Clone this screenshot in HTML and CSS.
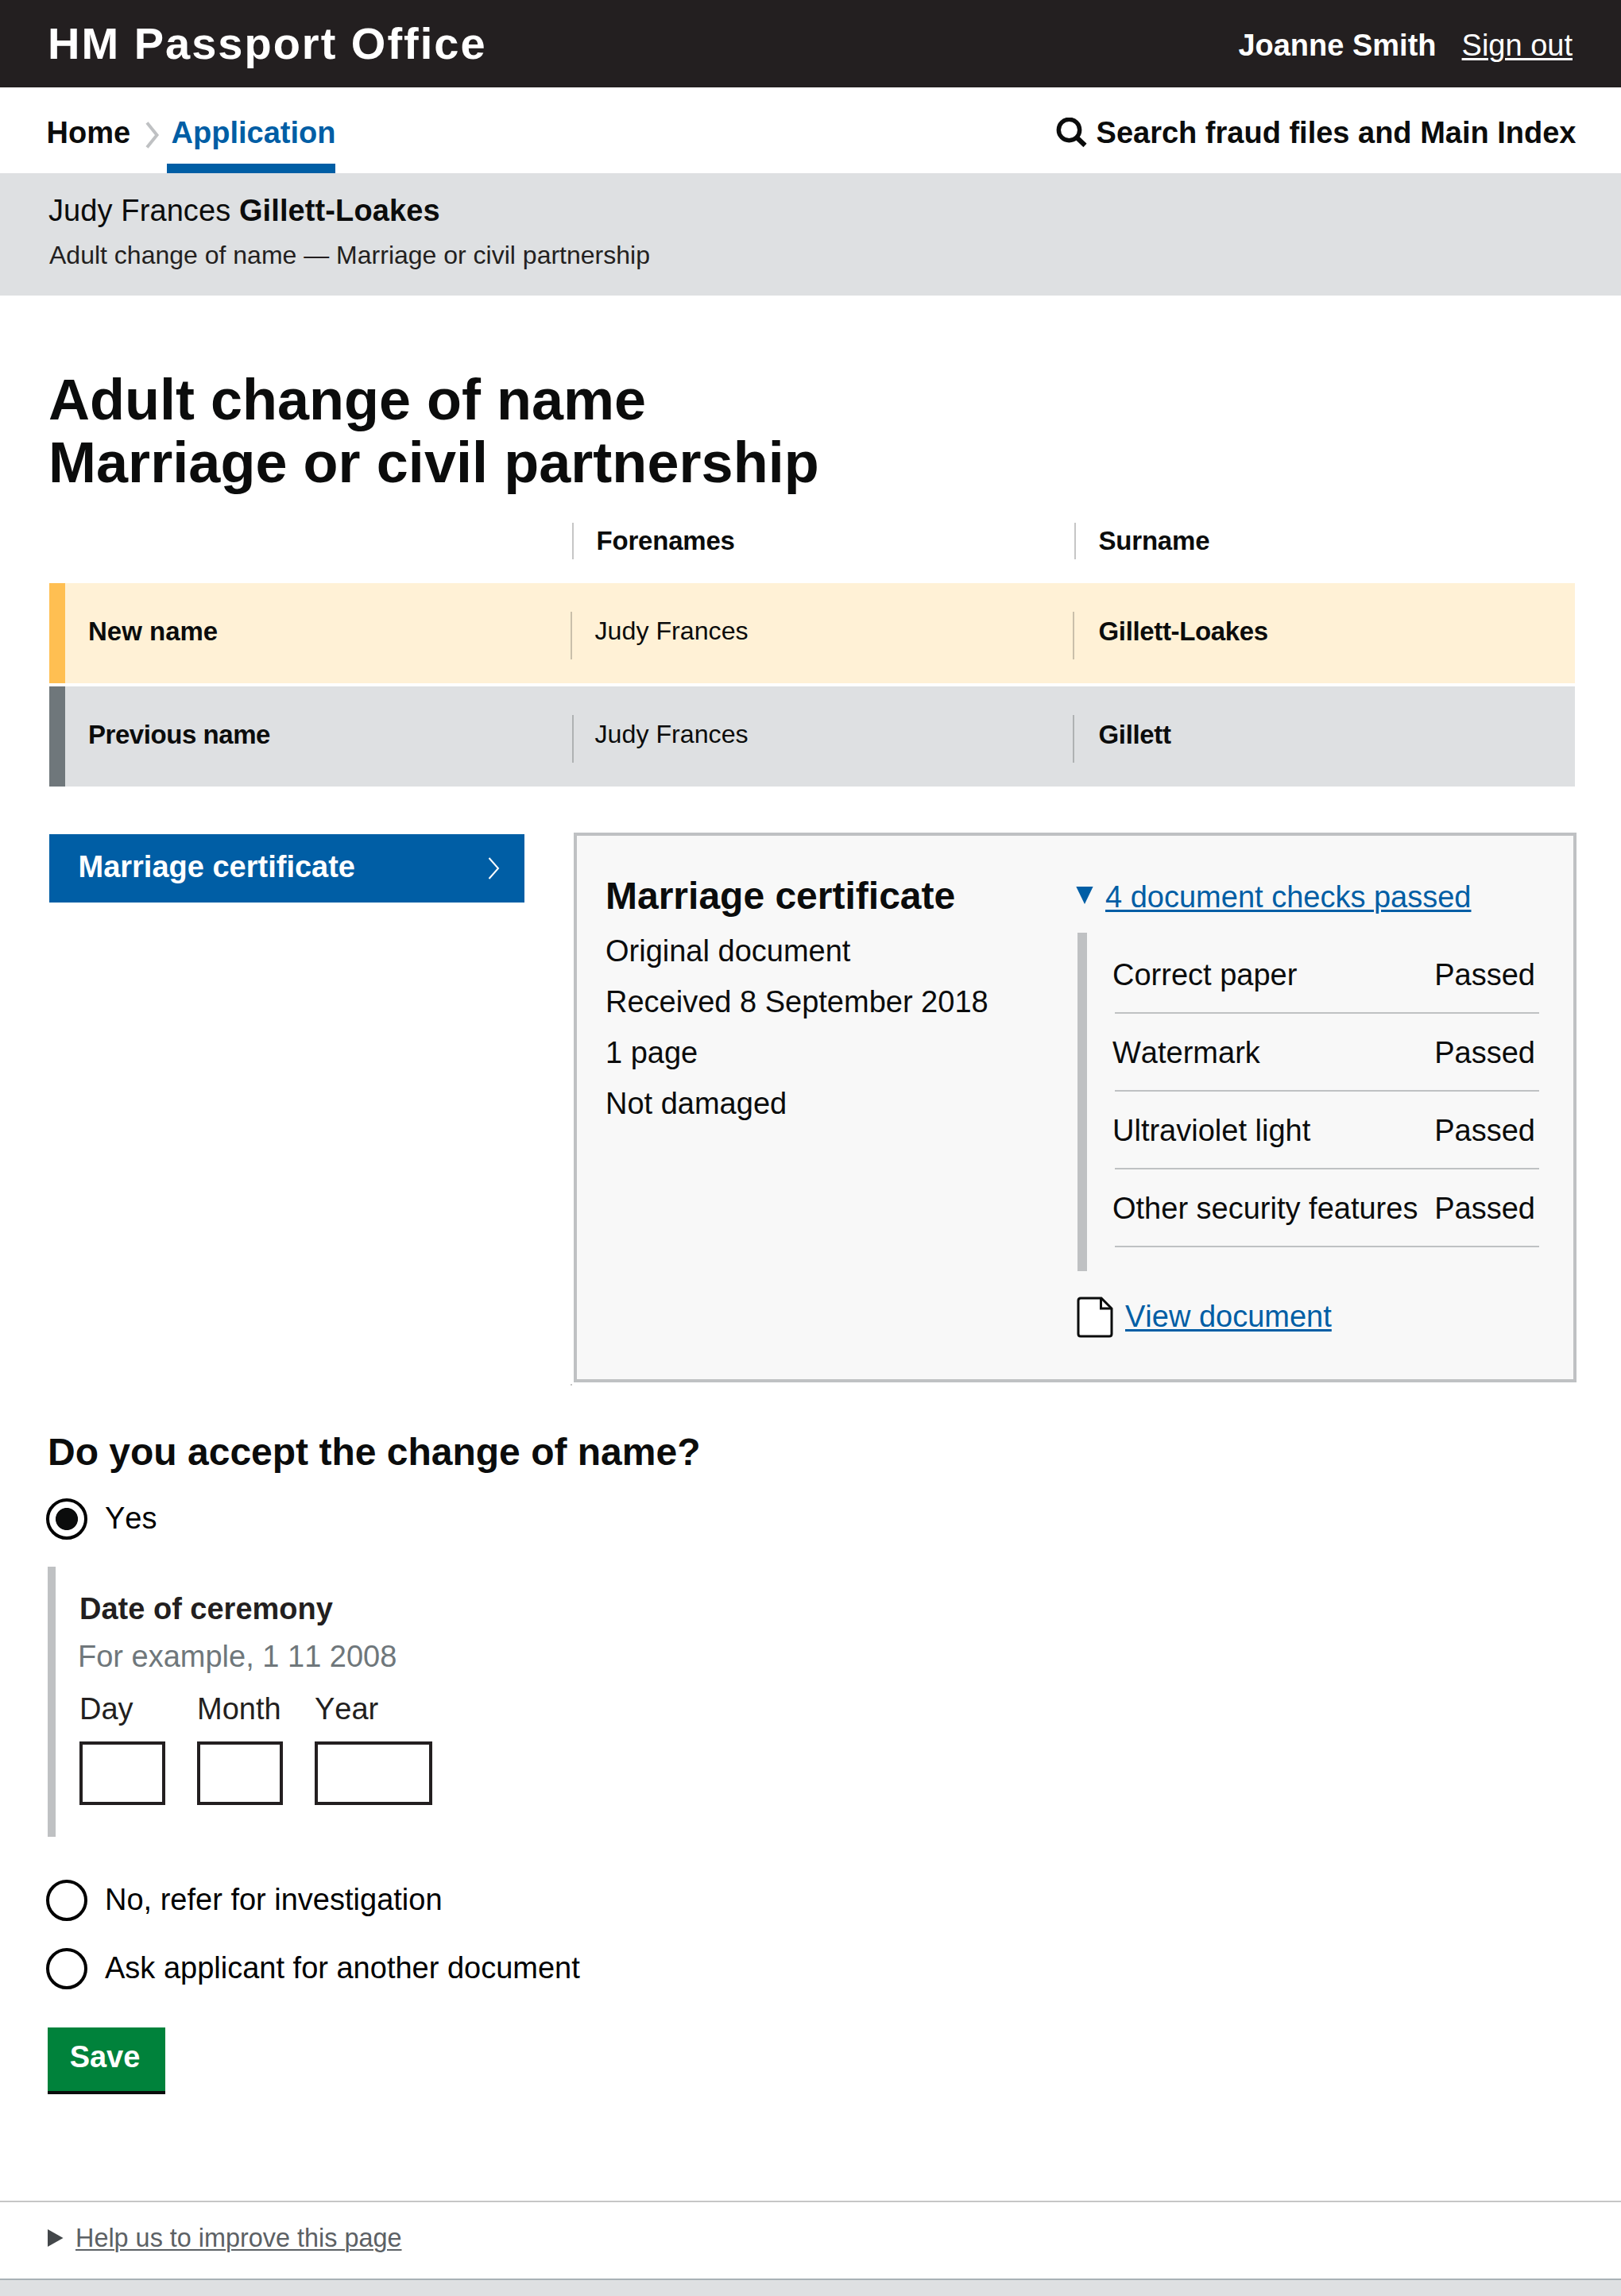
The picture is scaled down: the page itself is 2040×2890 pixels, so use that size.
FILE: index.html
```html
<!DOCTYPE html>
<html lang="en">
<head>
<meta charset="utf-8">
<title>Adult change of name - HM Passport Office</title>
<link rel="stylesheet" href="styles.css">
</head>
<body>
<header class="masthead">
  <div class="masthead-title">HM Passport Office</div>
  <div class="account"><strong>Joanne Smith</strong><a class="link-light" href="#">Sign out</a></div>
</header>
<nav class="nav">
  <a class="nav-link" href="#">Home</a>
  <svg class="nav-chevron" width="18" height="34" viewBox="0 0 18 34"><path d="M2 1.500 L14.500 17 L2 32.500" fill="none" stroke="#bfc1c3" stroke-width="4"/></svg>
  <a class="nav-link nav-current" href="#">Application</a>
  <a class="nav-link nav-search" href="#">
    <svg class="search-icon" width="39" height="38" viewBox="0 0 39 38"><circle cx="16.500" cy="15.500" r="13.200" fill="none" stroke="#0b0c0c" stroke-width="5.400"/><path d="M25.500 24.500 L36.500 35" stroke="#0b0c0c" stroke-width="6"/></svg>
    <span>Search fraud files and Main Index</span>
  </a>
</nav>
<section class="case-bar">
  <div class="case-name">Judy Frances <b>Gillett-Loakes</b></div>
  <div class="case-type">Adult change of name — Marriage or civil partnership</div>
</section>
<main>
  <h1 class="title">Adult change of name<br><span class="title-second">Marriage or civil partnership</span></h1>
  <div class="names">
    <div class="names-head"><span></span><span class="cell">Forenames</span><span class="cell">Surname</span></div>
    <div class="names-row names-new"><b class="row-label">New name</b><span class="cell forenames">Judy Frances</span><b class="cell surname">Gillett-Loakes</b></div>
    <div class="names-row names-previous"><b class="row-label">Previous name</b><span class="cell forenames">Judy Frances</span><b class="cell surname">Gillett</b></div>
  </div>
  <div class="evidence">
    <a class="tab" href="#"><span>Marriage certificate</span>
      <svg class="tab-chevron" width="16" height="28" viewBox="0 0 16 28"><path d="M1.500 1 L13 14 L1.500 27" fill="none" stroke="#fff" stroke-width="2"/></svg>
    </a>
    <section class="panel">
      <div class="panel-summary">
        <h2 class="panel-title">Marriage certificate</h2>
        <p>Original document</p>
        <p>Received 8 September 2018</p>
        <p>1 page</p>
        <p>Not damaged</p>
      </div>
      <div class="panel-checks">
        <div class="checks-toggle">
          <svg class="toggle-arrow" width="22" height="22" viewBox="0 0 22 22"><path d="M0.300 0 H21.600 L11 22 Z" fill="#005ea5"/></svg>
          <a class="link" href="#">4 document checks passed</a>
        </div>
        <ul class="checks">
          <li><span>Correct paper</span><span>Passed</span></li>
          <li><span>Watermark</span><span>Passed</span></li>
          <li><span>Ultraviolet light</span><span>Passed</span></li>
          <li><span>Other security features</span><span>Passed</span></li>
        </ul>
        <div class="view">
          <svg width="46" height="52" viewBox="0 0 46 52"><path d="M5 2 H31 L44 15 V47 Q44 50 41 50 H5 Q2 50 2 47 V5 Q2 2 5 2 Z" fill="#fff" stroke="#0b0c0c" stroke-width="3"/><path d="M30.500 2 V15 H44" fill="none" stroke="#0b0c0c" stroke-width="3"/></svg>
          <a class="link" href="#">View document</a>
        </div>
      </div>
    </section>
  </div>
  <form class="decision">
    <h2 class="question">Do you accept the change of name?</h2>
    <div class="option option-yes"><span class="radio radio-checked"></span>Yes</div>
    <div class="ceremony">
      <div class="ceremony-title">Date of ceremony</div>
      <div class="hint">For example, 1 11 2008</div>
      <div class="date-fields">
        <label class="field">Day<span class="box"></span></label>
        <label class="field">Month<span class="box"></span></label>
        <label class="field field-year">Year<span class="box"></span></label>
      </div>
    </div>
    <div class="option option-no"><span class="radio"></span>No, refer for investigation</div>
    <div class="option option-ask"><span class="radio"></span>Ask applicant for another document</div>
    <button class="save" type="button">Save</button>
  </form>
</main>
<footer class="feedback">
  <svg class="feedback-arrow" width="20" height="22" viewBox="0 0 20 22"><path d="M0 0 V22 L19.500 11 Z" fill="#43474a"/></svg>
  <a class="feedback-link" href="#">Help us to improve this page</a>
</footer>
<div class="footer-band"></div>
</body>
</html>
```
FILE: styles.css
```css
* { box-sizing: border-box; }

body {
  margin: 0;
  width: 2040px;
  background: #fff;
  color: #0b0c0c;
  font-family: "Liberation Sans", Arial, sans-serif;
  font-size: 38px;
  font-kerning: none;
  line-height: 50px;
}

h1, h2, p, ul { margin: 0; padding: 0; }
a { color: inherit; text-decoration: none; }
svg { display: block; flex: none; }

/* Masthead */
.masthead {
  display: flex;
  justify-content: space-between;
  height: 110px;
  padding: 0 61px 0 60px;
  background: #231f20;
  color: #fff;
}
.masthead-title { font-size: 56px; font-weight: bold; line-height: 109px; letter-spacing: 2px; }
.account { display: flex; gap: 32px; padding-top: 4px; line-height: 106px; }
.link-light { text-decoration: underline 3px; text-underline-offset: 3px; }

/* Navigation */
.nav { display: flex; height: 108px; padding-left: 58.5px; padding-right: 56.5px; font-weight: bold; }
.nav-link { padding-top: 19px; line-height: 76px; }
.nav-chevron { margin: 43px 9px 0 19px; }
.nav-current { padding-left: 5.5px; color: #005ea5; border-bottom: 12px solid #005ea5; width: 212px; }
.nav-search { display: flex; gap: 12px; margin-left: auto; }
.search-icon { margin-top: 19px; }

/* Case bar */
.case-bar { height: 154px; padding: 25px 0 0 61px; background: #dee0e2; }
.case-name { line-height: 44px; letter-spacing: 0.1px; }
.case-type { margin-top: 14px; padding-left: 1px; font-size: 32px; line-height: 40px; color: #231f20; }

/* Title */
.title { padding: 92px 0 0 61px; font-size: 72px; line-height: 78.5px; }
.title-second { letter-spacing: 0.05px; }

/* Names table */
.names { width: 1920px; margin: 37px 0 0 62px; font-size: 33px; letter-spacing: -0.2px; }
.names-head { display: grid; grid-template-columns: 658px 632px 1fr; height: 46px; margin-bottom: 30px; font-weight: bold; line-height: 45px; }
.cell { border-left: 2px solid #c6c6c6; padding-left: 28.5px; }
.names-row { display: grid; grid-template-columns: 636px 632px 1fr; height: 126px; padding: 36px 0 30px; border-left: 20px solid; line-height: 49px; }
.names-row .cell { border-color: rgba(11, 12, 12, 0.22); }
.row-label { padding-left: 29px; letter-spacing: 0; }
.forenames { font-size: 32.2px; letter-spacing: 0; }
.names-row .surname { padding-left: 30.5px; letter-spacing: -0.35px; }
.names-new { background: #fff1d6; border-color: #ffbf52; }
.names-previous { grid-template-columns: 638px 630px 1fr; margin-top: 4px; background: #dee0e2; border-color: #6f777b; }
.names-previous .row-label { letter-spacing: -0.45px; }
.names-previous .forenames { padding-left: 26.5px; }

/* Evidence */
.evidence { display: flex; gap: 62px; margin: 58px 0 0 62px; }
.tab {
  display: flex;
  justify-content: space-between;
  width: 598px;
  height: 86px;
  margin-top: 2px;
  padding: 0 30px 0 36.5px;
  background: #005ea5;
  color: #fff;
  font-weight: bold;
  line-height: 82px;
}
.tab-chevron { margin-top: 29px; }
.panel { position: relative; display: flex; width: 1262px; height: 692px; border: 4px solid #bfc1c3; background: #f8f8f8; }
.panel::after { content: ""; position: absolute; left: -8px; bottom: -8px; width: 2px; height: 2px; background: #c6c6c6; }
.panel-summary { width: 628px; padding: 47px 0 0 36px; line-height: 64px; }
.panel-title { margin-bottom: 9px; font-size: 48px; line-height: 57px; }
.panel-checks { padding-top: 52px; }
.checks-toggle { display: flex; gap: 15px; }
.toggle-arrow { margin-top: 12px; }
.link { color: #005ea5; text-decoration: underline 3px; text-underline-offset: 3px; }
.checks { width: 583px; height: 426px; margin: 20px 0 0 2px; padding: 4px 0 0 35px; border-left: 12px solid #bfc1c3; list-style: none; }
.checks li { display: flex; justify-content: space-between; width: 534px; height: 98px; padding: 2px 5px 0 0; border-bottom: 2px solid #bfc1c3; line-height: 94px; }
.checks li span:first-child { margin-left: -3px; }
.view { display: flex; gap: 15px; margin: 32px 0 0 1px; }

/* Decision form */
.decision { padding: 59px 0 0 60px; }
.question { font-size: 48px; line-height: 57px; }
.option { display: flex; height: 52px; gap: 22px; margin-left: -2px; color: #000; }
.option-yes { margin-top: 30px; }
.option-no { margin-top: 54px; }
.option-ask { margin-top: 34px; }
.radio { width: 52px; height: 52px; border: 4px solid #000; border-radius: 50%; background: #fff; }
.radio-checked { background: radial-gradient(circle, #0b0c0c 13.6px, #fff 14.4px); }
.ceremony { height: 340px; margin-top: 34px; padding: 28px 0 0 30px; border-left: 10px solid #bfc1c3; color: #231f20; }
.ceremony-title { font-weight: bold; }
.hint { margin: 10px 0 16px -2px; color: #6f777b; }
.date-fields { display: flex; gap: 40px; }
.field { display: flex; flex-direction: column; gap: 16px; width: 108px; }
.field-year { width: 148px; }
.box { height: 80px; border: 4px solid #231f20; background: #fff; }
.save {
  display: block;
  width: 148px;
  height: 84px;
  margin-top: 48px;
  padding: 0 4px 6px 0;
  border: 0;
  border-bottom: 4px solid #0b0c0c;
  background: #00823b;
  color: #fff;
  font: bold 38px/74px "Liberation Sans", Arial, sans-serif;
  font-kerning: none;
}

/* Footer */
.feedback {
  display: flex;
  gap: 15px;
  height: 98px;
  margin-top: 134px;
  padding: 19.5px 0 0 60px;
  border-top: 2px solid #c6c6c6;
  color: #5c6165;
  font-size: 32.4px;
}
.feedback-arrow { margin-top: 14px; }
.feedback-link { text-decoration: underline 2px; text-underline-offset: 3px; }
.footer-band { height: 22px; border-top: 2px solid #a9b1b6; background: #dee0e2; }
```
